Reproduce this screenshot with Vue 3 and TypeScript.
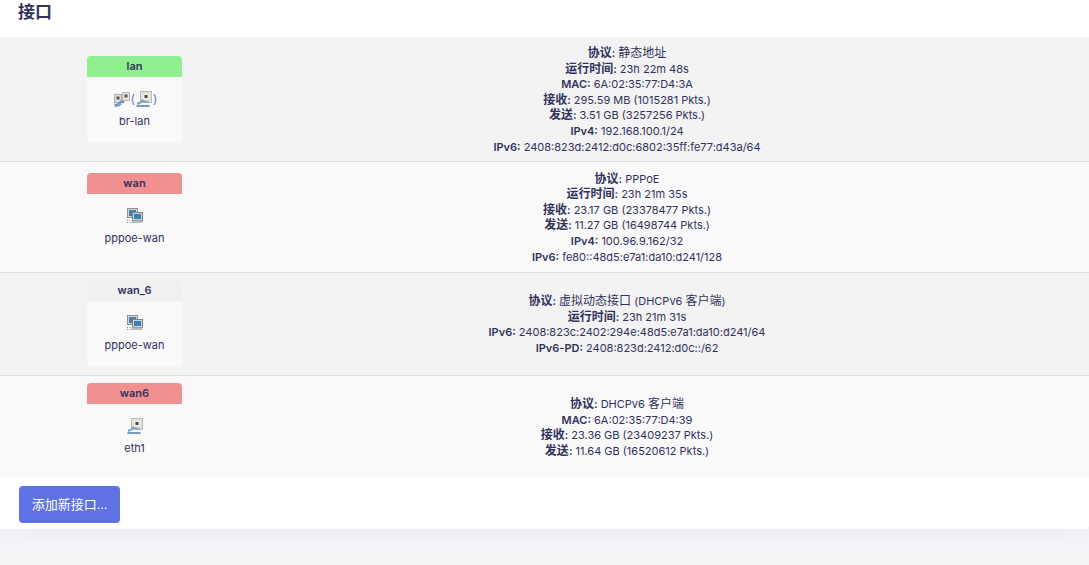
<template>
	<div class="page">
		<section class="panel">
			<h3 class="title">接口</h3>
			<div class="table">
				<div v-for="row in rows" :key="row.name" class="row">
					<div class="cell-box">
						<div class="ifacebox">
							<div class="ifacebox-head" :class="`ifacebox-head--${row.zone}`">{{ row.name }}</div>
							<div class="ifacebox-body">
								<div class="icons">
									<template v-for="(icon, i) in row.icons" :key="i">
										<span v-if="icon === '('" class="paren">(</span>
										<span v-else-if="icon === ')'" class="paren">)</span>
										<svg v-else-if="icon === 'bridge'" class="icon" viewBox="0 0 16 16">
											<rect x="8.500" y="1.500" width="7" height="8" fill="#e4e4e4" stroke="#b9b9b9" />
											<rect x="10.500" y="3.500" width="3" height="3" fill="#5a5646" />
											<rect x="0.500" y="3.500" width="7" height="8" fill="#dcdcdc" stroke="#adadad" />
											<rect x="2.500" y="5.500" width="3" height="3" fill="#5a5646" />
											<path d="M.5 13.500c2.500.8 5-.4 6.500-3 .8.6 2 .8 3.500.4" fill="none" stroke="#6a93c6" stroke-width="2" />
											<path d="M1 15.200c3 .2 5.500-.6 7-2.700" fill="none" stroke="#4f78ad" stroke-width="1" />
										</svg>
										<svg v-else-if="icon === 'eth'" class="icon" viewBox="0 0 16 16">
											<rect x="4.500" y="0.500" width="11" height="11" fill="#e2e2e2" stroke="#bcbcbc" />
											<rect x="7.500" y="3" width="5" height="5" fill="#f2f2dc" />
											<rect x="8.500" y="4" width="3" height="3" fill="#4d4a38" />
											<path d="M1 12.800c2.300 0 3.800-1 5.200-3.300 1.600 1.200 3.800 1.500 6.300 1" fill="none" stroke="#7ea3d0" stroke-width="2" />
											<path d="M.5 15h13" stroke="#4f78ad" stroke-width="1.400" fill="none" />
										</svg>
										<svg v-else class="icon" viewBox="0 0 16 16">
											<rect x="0.500" y="0.500" width="10" height="9" fill="#d3d6d8" stroke="#8b9296" />
											<rect x="2" y="2" width="7" height="6" fill="#4d7ca8" />
											<rect x="5.500" y="4.500" width="10" height="8" fill="#d0d3d5" stroke="#7b8285" />
											<rect x="7" y="6" width="7" height="5" fill="#3a7fb5" />
											<rect x="4.500" y="12.500" width="11" height="2.500" fill="#b9bbbb" />
											<path d="M0 12.500h1M0 14.500h1M2.500 12.500h1M2.500 14.500h1" stroke="#6b98c6" stroke-width="1" />
										</svg>
									</template>
								</div>
								<div class="device">{{ row.device }}</div>
							</div>
						</div>
					</div>
					<div class="cell-info">
						<div v-for="line in row.lines" :key="line[0]">
							<strong><span v-for="(s, i) in split(line[0])" :key="i" :class="{ zh: s.zh }">{{ s.text }}</span>:</strong>
							{{ ' ' }}
							<span v-for="(s, i) in split(line[1])" :key="i" :class="{ zh: s.zh }">{{ s.text }}</span>
						</div>
					</div>
				</div>
			</div>
			<div class="actions">
				<button class="add-button" type="button"><span class="zh">添加新接口</span>...</button>
			</div>
		</section>
	</div>
</template>

<script setup lang="ts">
type Zone = 'lan' | 'wan' | 'none'

interface IfaceRow {
	readonly name: string
	readonly zone: Zone
	readonly icons: readonly string[]
	readonly device: string
	readonly lines: readonly (readonly [string, string])[]
}

// latin runs sit a size below the CJK runs
const split = (text: string) =>
	(text.match(/[\u4e00-\u9fff]+|[^\u4e00-\u9fff]+/g) ?? []).map((part) => ({
		text: part,
		zh: /[\u4e00-\u9fff]/.test(part),
	}))

const rows: readonly IfaceRow[] = [
	{
		name: 'lan',
		zone: 'lan',
		icons: ['bridge', '(', 'eth', ')'],
		device: 'br-lan',
		lines: [
			['协议', '静态地址'],
			['运行时间', '23h 22m 48s'],
			['MAC', '6A:02:35:77:D4:3A'],
			['接收', '295.59 MB (1015281 Pkts.)'],
			['发送', '3.51 GB (3257256 Pkts.)'],
			['IPv4', '192.168.100.1/24'],
			['IPv6', '2408:823d:2412:d0c:6802:35ff:fe77:d43a/64'],
		],
	},
	{
		name: 'wan',
		zone: 'wan',
		icons: ['ppp'],
		device: 'pppoe-wan',
		lines: [
			['协议', 'PPPoE'],
			['运行时间', '23h 21m 35s'],
			['接收', '23.17 GB (23378477 Pkts.)'],
			['发送', '11.27 GB (16498744 Pkts.)'],
			['IPv4', '100.96.9.162/32'],
			['IPv6', 'fe80::48d5:e7a1:da10:d241/128'],
		],
	},
	{
		name: 'wan_6',
		zone: 'none',
		icons: ['ppp'],
		device: 'pppoe-wan',
		lines: [
			['协议', '虚拟动态接口 (DHCPv6 客户端)'],
			['运行时间', '23h 21m 31s'],
			['IPv6', '2408:823c:2402:294e:48d5:e7a1:da10:d241/64'],
			['IPv6-PD', '2408:823d:2412:d0c::/62'],
		],
	},
	{
		name: 'wan6',
		zone: 'wan',
		icons: ['eth'],
		device: 'eth1',
		lines: [
			['协议', 'DHCPv6 客户端'],
			['MAC', '6A:02:35:77:D4:39'],
			['接收', '23.36 GB (23409237 Pkts.)'],
			['发送', '11.64 GB (16520612 Pkts.)'],
		],
	},
]
</script>

<style>
html,
body {
	margin: 0;
	background: #f4f5f7;
	overflow: hidden;
}
</style>

<style scoped>
.page {
	height: 565px;
	font-family: Inter, 'Noto Sans CJK SC', sans-serif;
	font-size: 11px;
	line-height: 15.6px;
	color: #32325d;
}

.zh {
	font-size: 12px;
	line-height: 1;
}

.panel {
	background: #fff;
	border-radius: 0 0 4px 4px;
	box-shadow: 0 0 24px rgba(136, 152, 170, 0.12);
}

.title {
	margin: 0;
	height: 37px;
	padding: 2px 0 0 18px;
	box-sizing: border-box;
	font-size: 17px;
	line-height: 20px;
	font-weight: 600;
	color: #32325d;
}

.row {
	display: grid;
	grid-template-columns: 269px 716px 104px;
	align-items: center;
	padding: 7.5px 0;
	background: #f9f9f9;
	border-top: 1px solid #dee2e6;
}

.row:first-child {
	border-top: none;
}

.row:nth-child(odd) {
	background: #f3f3f3;
}

.row:nth-child(2) {
	padding: 8px 0;
}

.row:last-child {
	padding-bottom: 7px;
}

.cell-box {
	display: flex;
	justify-content: center;
}

.ifacebox {
	width: 95px;
	height: 87px;
	background: #f9f9f9;
	border-radius: 4px;
	overflow: hidden;
	text-align: center;
}

.ifacebox-head {
	height: 21px;
	line-height: 20px;
	font-weight: 600;
	background: #f0f0f0;
}

.ifacebox-head--lan {
	background: #90f090;
}

.ifacebox-head--wan {
	background: #f09090;
}

.ifacebox-body {
	padding-top: 13px;
}

.icons {
	display: flex;
	justify-content: center;
	align-items: center;
	gap: 3px;
	height: 18px;
}

.icon {
	width: 16px;
	height: 16px;
}

.paren {
	margin: 0 -2px;
	color: #5e72e4;
	font-size: 12px;
}

.device {
	margin-top: 6px;
}

.cell-info {
	padding-top: 1.5px;
	margin-bottom: -1.5px;
	text-align: center;
}

.cell-info strong {
	font-weight: 600;
}

.actions {
	padding: 9px 19px 6px;
}

.add-button {
	display: block;
	width: 101px;
	height: 37px;
	padding: 0;
	border: none;
	border-radius: 4px;
	background: #5e72e4;
	color: #fff;
	font-family: inherit;
	font-size: 12px;
}

.add-button .zh {
	font-size: 13px;
}
</style>
